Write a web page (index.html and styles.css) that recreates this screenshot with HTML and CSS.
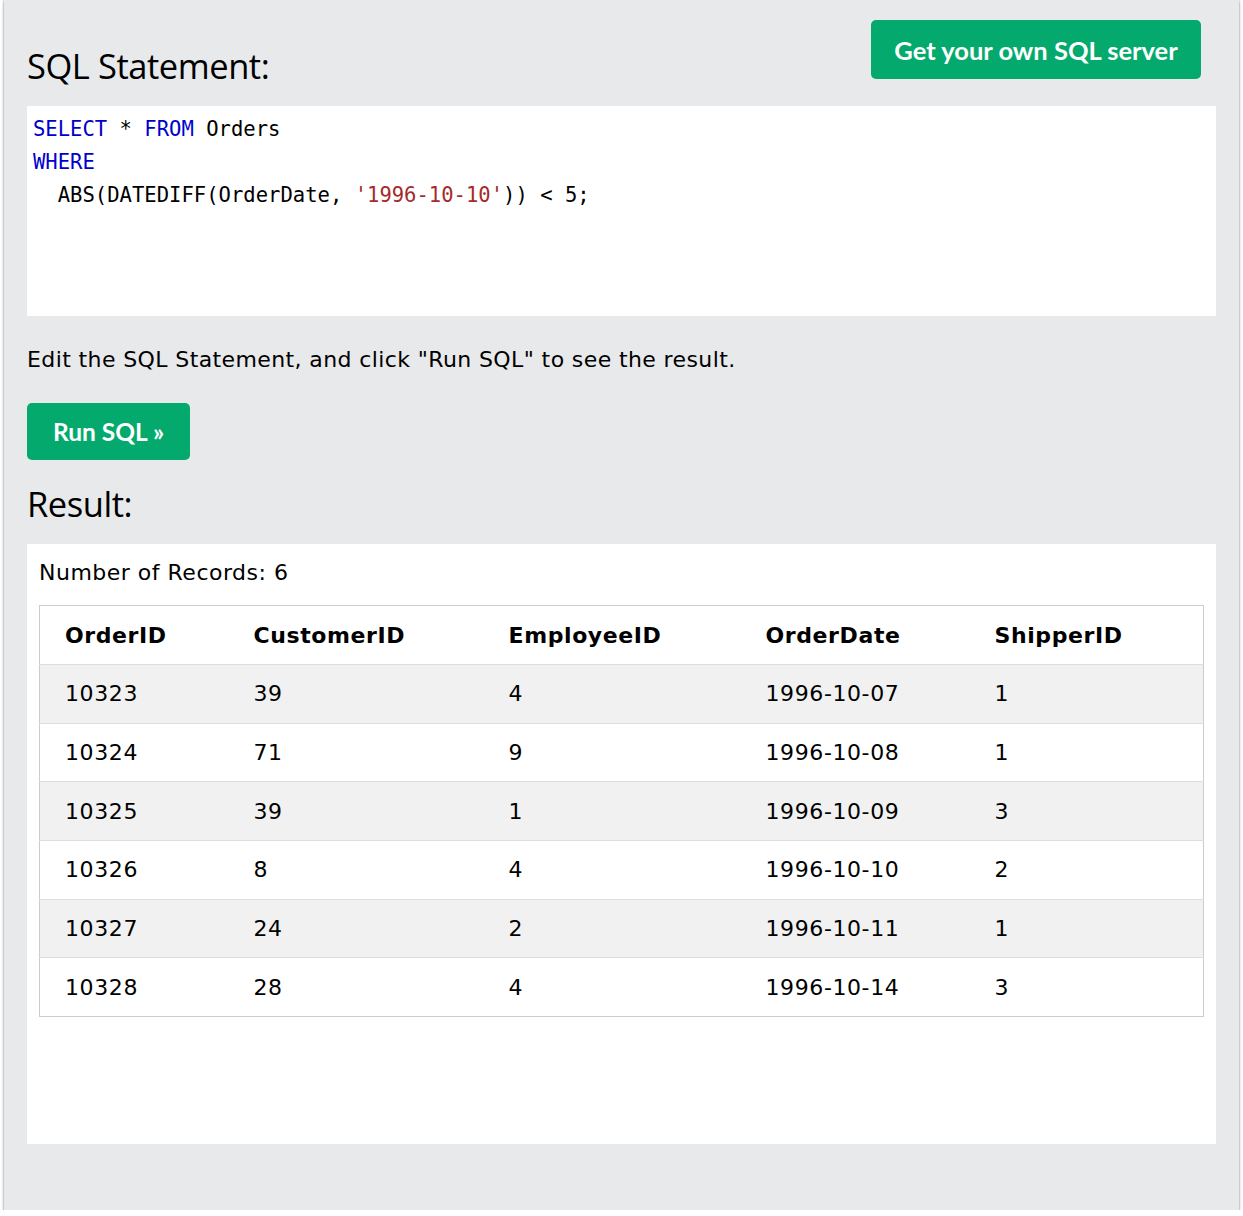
FILE: index.html
```html
<!DOCTYPE html>
<html lang="en">
<head>
<meta charset="utf-8">
<title>SQL Tryit</title>
<link rel="stylesheet" href="styles.css">
</head>
<body>
<div class="panel">
  <div class="top-row">
    <h3 class="heading heading-sql">SQL Statement:</h3>
    <a class="btn btn-server" href="#">Get your own SQL server</a>
  </div>
  <div class="code-box"><pre class="code"><span class="kw">SELECT</span> * <span class="kw">FROM</span> Orders
<span class="kw">WHERE</span>
  ABS(DATEDIFF(OrderDate, <span class="str">'1996-10-10'</span>)) &lt; 5;</pre></div>
  <p class="hint">Edit the SQL Statement, and click "Run SQL" to see the result.</p>
  <a class="btn btn-run" href="#">Run SQL »</a>
  <h3 class="heading heading-result">Result:</h3>
  <div class="result-box">
    <div class="records">Number of Records: 6</div>
    <table class="result-table">
      <colgroup>
        <col class="c1"><col class="c2"><col class="c3"><col class="c4"><col class="c5">
      </colgroup>
      <thead>
        <tr><th>OrderID</th><th>CustomerID</th><th>EmployeeID</th><th>OrderDate</th><th>ShipperID</th></tr>
      </thead>
      <tbody>
        <tr><td>10323</td><td>39</td><td>4</td><td>1996-10-07</td><td>1</td></tr>
        <tr><td>10324</td><td>71</td><td>9</td><td>1996-10-08</td><td>1</td></tr>
        <tr><td>10325</td><td>39</td><td>1</td><td>1996-10-09</td><td>3</td></tr>
        <tr><td>10326</td><td>8</td><td>4</td><td>1996-10-10</td><td>2</td></tr>
        <tr><td>10327</td><td>24</td><td>2</td><td>1996-10-11</td><td>1</td></tr>
        <tr><td>10328</td><td>28</td><td>4</td><td>1996-10-14</td><td>3</td></tr>
      </tbody>
    </table>
  </div>
</div>
</body>
</html>
```
FILE: styles.css
```css
html, body {
  margin: 0;
  padding: 0;
  background: #ffffff;
}
body {
  padding: 0 4px 0 4px;
  font-family: "DejaVu Sans", Verdana, sans-serif;
  color: #000;
}
.panel {
  background: #e7e9eb;
  height: 1210px;
  box-sizing: border-box;
  padding: 20px 23px 0 23px;
  box-shadow: 0 2px 3px rgba(0,0,0,0.3), -1px 0 1px rgba(0,0,0,0.1), 1px 0 1px rgba(0,0,0,0.1);
}
.top-row {
  display: flex;
  justify-content: space-between;
  align-items: flex-start;
  padding-right: 15px;
}
.heading {
  font-family: "Open Sans", "Noto Sans", sans-serif;
  font-weight: 400;
  font-size: 34.5px;
  line-height: 40px;
  margin: 0;
  color: #000;
  letter-spacing: -0.45px;
}
.heading-sql {
  margin-top: 26px;
}
.btn {
  display: inline-flex;
  align-items: center;
  justify-content: center;
  background: #04aa6d;
  color: #fff;
  text-decoration: none;
  font-family: "Lato", "Open Sans", sans-serif;
  font-weight: 700;
  font-size: 25.5px;
  border-radius: 5px;
  box-sizing: border-box;
}
.btn-server {
  width: 330px;
  height: 59px;
}
.code-box {
  background: #fff;
  height: 210px;
  margin-top: 20px;
  box-sizing: border-box;
  padding: 7px 6px 0 6px;
}
.code {
  margin: 0;
  font-family: "DejaVu Sans Mono", "Liberation Mono", monospace;
  font-size: 20.55px;
  line-height: 33px;
  color: #000;
}
.kw { color: #0000cd; }
.str { color: #a52a2a; }
.hint {
  margin: 29px 0 0 0;
  font-size: 22px;
  line-height: 30px;
  letter-spacing: 0.39px;
}
.btn-run {
  margin-top: 28px;
  width: 163px;
  height: 57px;
  font-size: 24.5px;
}
.heading-result {
  margin-top: 24px;
}
.result-box {
  background: #fff;
  height: 600px;
  margin-top: 20px;
  box-sizing: border-box;
  padding: 14px 12px 0 12px;
}
.records {
  font-size: 22px;
  line-height: 30px;
  letter-spacing: 0.5px;
}
.result-table {
  margin-top: 17px;
  width: 100%;
  border-collapse: collapse;
  table-layout: fixed;
  border: 1px solid #cccccc;
  font-size: 22px;
  letter-spacing: 0.6px;
}
.c1 { width: 189px; }
.c2 { width: 255px; }
.c3 { width: 257px; }
.c4 { width: 229px; }
.result-table th,
.result-table td {
  text-align: left;
  padding: 0 0 0 25px;
  height: 57.7px;
  border-bottom: 1px solid #dddddd;
}
.result-table th {
  font-weight: 700;
  height: 58px;
}
.result-table tbody tr:nth-child(odd) {
  background: #f1f1f1;
}
.result-table tbody tr:last-child td {
  border-bottom: 1px solid #cccccc;
}
```
